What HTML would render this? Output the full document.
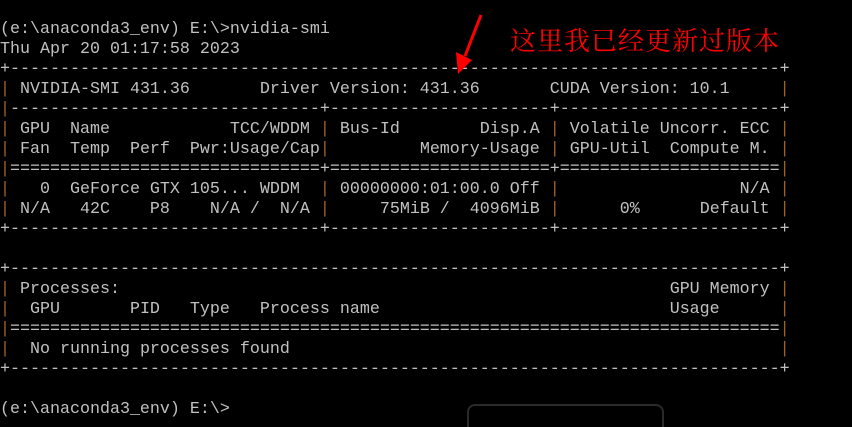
<!DOCTYPE html>
<html><head><meta charset="utf-8"><style>
html,body{margin:0;padding:0;background:#000;width:852px;height:427px;overflow:hidden;position:relative}
pre{position:absolute;left:0;top:20px;margin:0;font-family:"Liberation Mono",monospace;font-size:16.67px;line-height:20px;color:#c0c0c0;white-space:pre}
.b{color:#a0602a}
.cn{position:absolute;left:510px;top:24px;font-family:"Noto Serif CJK SC","Noto Sans CJK SC",serif;font-size:26px;color:#f00;letter-spacing:1px;line-height:32px}
.box{position:absolute;left:467px;top:404px;width:193px;height:40px;border:2px solid #2a2a2a;border-radius:8px}
</style></head><body>
<pre>(e:\anaconda3_env) E:\&gt;nvidia-smi
Thu Apr 20 01:17:58 2023
+-----------------------------------------------------------------------------+
<span class="b">|</span> NVIDIA-SMI 431.36       Driver Version: 431.36       CUDA Version: 10.1     <span class="b">|</span>
<span class="b">|</span>-------------------------------+----------------------+----------------------+
<span class="b">|</span> GPU  Name            TCC/WDDM <span class="b">|</span> Bus-Id        Disp.A <span class="b">|</span> Volatile Uncorr. ECC <span class="b">|</span>
<span class="b">|</span> Fan  Temp  Perf  Pwr:Usage/Cap<span class="b">|</span>         Memory-Usage <span class="b">|</span> GPU-Util  Compute M. <span class="b">|</span>
<span class="b">|</span>===============================+======================+======================<span class="b">|</span>
<span class="b">|</span>   0  GeForce GTX 105... WDDM  <span class="b">|</span> 00000000:01:00.0 Off <span class="b">|</span>                  N/A <span class="b">|</span>
<span class="b">|</span> N/A   42C    P8    N/A /  N/A <span class="b">|</span>     75MiB /  4096MiB <span class="b">|</span>      0%      Default <span class="b">|</span>
+-------------------------------+----------------------+----------------------+

+-----------------------------------------------------------------------------+
<span class="b">|</span> Processes:                                                       GPU Memory <span class="b">|</span>
<span class="b">|</span>  GPU       PID   Type   Process name                             Usage      <span class="b">|</span>
<span class="b">|</span>=============================================================================<span class="b">|</span>
<span class="b">|</span>  No running processes found                                                 <span class="b">|</span>
+-----------------------------------------------------------------------------+

(e:\anaconda3_env) E:\&gt;</pre>
<div class="cn">这里我已经更新过版本</div>
<svg style="position:absolute;left:0;top:0" width="852" height="427">
<line x1="481" y1="15" x2="465" y2="56" stroke="#f00" stroke-width="3"/>
<polygon points="456,52 472,60 458,74" fill="#f00"/>
</svg>
<div class="box"></div>
</body></html>
